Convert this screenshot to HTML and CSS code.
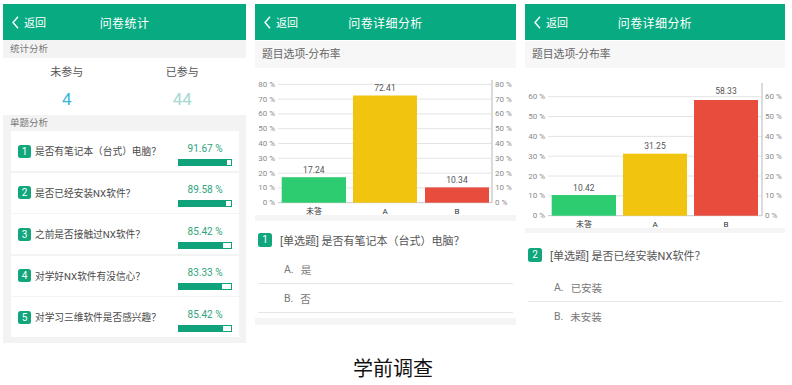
FILE: index.html
```html
<!DOCTYPE html>
<html lang="zh-CN">
<head>
<meta charset="utf-8">
<title>学前调查</title>
<link rel="stylesheet" href="styles.css">
</head>
<body>
<div class="page">
  <div class="row">
    <section class="panel panel-stats">
      <header class="bar">
        <span class="back"><svg class="chev" width="7" height="13" viewBox="0 0 7 13"><path d="M6 0.8 L1 6.5 L6 12.2" fill="none" stroke="#fff" stroke-width="1.4"/></svg>返回</span>
        <span class="title">问卷统计</span>
        <span></span>
      </header>
      <div class="sec">统计分析</div>
      <div class="summary">
        <div class="col"><div class="lbl">未参与</div><div class="num num-a">4</div></div>
        <div class="col"><div class="lbl">已参与</div><div class="num num-b">44</div></div>
      </div>
      <div class="sec sec2">单题分析</div>
      <ul class="qlist">
        <li class="qcard"><span class="badge">1</span><span class="qtext">是否有笔记本（台式）电脑？</span><div class="rate"><span class="pct">91.67 %</span><div class="meter"><div class="fill" style="width:91.67%"></div></div></div></li>
        <li class="qcard"><span class="badge">2</span><span class="qtext">是否已经安装NX软件？</span><div class="rate"><span class="pct">89.58 %</span><div class="meter"><div class="fill" style="width:89.58%"></div></div></div></li>
        <li class="qcard"><span class="badge">3</span><span class="qtext">之前是否接触过NX软件？</span><div class="rate"><span class="pct">85.42 %</span><div class="meter"><div class="fill" style="width:85.42%"></div></div></div></li>
        <li class="qcard"><span class="badge">4</span><span class="qtext">对学好NX软件有没信心？</span><div class="rate"><span class="pct">83.33 %</span><div class="meter"><div class="fill" style="width:83.33%"></div></div></div></li>
        <li class="qcard"><span class="badge">5</span><span class="qtext">对学习三维软件是否感兴趣？</span><div class="rate"><span class="pct">85.42 %</span><div class="meter"><div class="fill" style="width:85.42%"></div></div></div></li>
      </ul>
    </section>

    <section class="panel panel-detail">
      <header class="bar">
        <span class="back"><svg class="chev" width="7" height="13" viewBox="0 0 7 13"><path d="M6 0.8 L1 6.5 L6 12.2" fill="none" stroke="#fff" stroke-width="1.4"/></svg>返回</span>
        <span class="title">问卷详细分析</span>
        <span></span>
      </header>
      <div class="sec-d">题目选项-分布率</div>
      <svg class="chart chart-a" width="261" height="147" viewBox="0 0 261 147">
        <g class="grid">
          <line x1="23" y1="16.3" x2="237" y2="16.3"/>
          <line x1="23" y1="31.1" x2="237" y2="31.1"/>
          <line x1="23" y1="45.9" x2="237" y2="45.9"/>
          <line x1="23" y1="60.7" x2="237" y2="60.7"/>
          <line x1="23" y1="75.5" x2="237" y2="75.5"/>
          <line x1="23" y1="90.3" x2="237" y2="90.3"/>
          <line x1="23" y1="105.1" x2="237" y2="105.1"/>
          <line x1="23" y1="119.9" x2="237" y2="119.9"/>
        </g>
        <line class="base" x1="23" y1="134.7" x2="237" y2="134.7"/>
        <line class="raxis" x1="237" y1="12" x2="237" y2="135"/>
        <g class="ax ax-l">
          <text x="20" y="16.3">80 %</text><text x="20" y="31.1">70 %</text><text x="20" y="45.9">60 %</text><text x="20" y="60.7">50 %</text><text x="20" y="75.5">40 %</text><text x="20" y="90.3">30 %</text><text x="20" y="105.1">20 %</text><text x="20" y="119.9">10 %</text><text x="20" y="134.7">0 %</text>
        </g>
        <g class="ax ax-r">
          <text x="240" y="16.3">80 %</text><text x="240" y="31.1">70 %</text><text x="240" y="45.9">60 %</text><text x="240" y="60.7">50 %</text><text x="240" y="75.5">40 %</text><text x="240" y="90.3">30 %</text><text x="240" y="105.1">20 %</text><text x="240" y="119.9">10 %</text><text x="240" y="134.7">0 %</text>
        </g>
        <rect class="b-g" x="26.7" y="109.2" width="64.3" height="25.5"/>
        <rect class="b-y" x="98" y="27.5" width="64" height="107.2"/>
        <rect class="b-r" x="170" y="119.4" width="64" height="15.3"/>
        <g class="val">
          <text x="58.8" y="104.5">17.24</text>
          <text x="130" y="22.5">72.41</text>
          <text x="202" y="114.5">10.34</text>
        </g>
        <g class="cat">
          <text x="59" y="143">未答</text><text x="130" y="143">A</text><text x="202" y="143">B</text>
        </g>
      </svg>
      <div class="strip strip-a"></div>
      <div class="question"><span class="badge badge-q">1</span><span class="qtitle">[单选题] 是否有笔记本（台式）电脑？</span></div>
      <ul class="options">
        <li class="opt"><span class="key">A.</span>是</li>
        <li class="opt"><span class="key">B.</span>否</li>
      </ul>
      <div class="strip strip-end"></div>
    </section>

    <section class="panel panel-detail panel-r">
      <header class="bar">
        <span class="back"><svg class="chev" width="7" height="13" viewBox="0 0 7 13"><path d="M6 0.8 L1 6.5 L6 12.2" fill="none" stroke="#fff" stroke-width="1.4"/></svg>返回</span>
        <span class="title">问卷详细分析</span>
        <span></span>
      </header>
      <div class="sec-d">题目选项-分布率</div>
      <svg class="chart chart-b" width="260" height="160" viewBox="0 0 260 160">
        <g class="grid">
          <line x1="23" y1="28.7" x2="237" y2="28.7"/>
          <line x1="23" y1="48.5" x2="237" y2="48.5"/>
          <line x1="23" y1="68.4" x2="237" y2="68.4"/>
          <line x1="23" y1="88.2" x2="237" y2="88.2"/>
          <line x1="23" y1="108" x2="237" y2="108"/>
          <line x1="23" y1="127.9" x2="237" y2="127.9"/>
        </g>
        <line class="base" x1="23" y1="147.7" x2="237" y2="147.7"/>
        <line class="raxis" x1="237" y1="15" x2="237" y2="148"/>
        <g class="ax ax-l">
          <text x="20" y="28.7">60 %</text><text x="20" y="48.5">50 %</text><text x="20" y="68.4">40 %</text><text x="20" y="88.2">30 %</text><text x="20" y="108">20 %</text><text x="20" y="127.9">10 %</text><text x="20" y="147.7">0 %</text>
        </g>
        <g class="ax ax-r">
          <text x="240" y="28.7">60 %</text><text x="240" y="48.5">50 %</text><text x="240" y="68.4">40 %</text><text x="240" y="88.2">30 %</text><text x="240" y="108">20 %</text><text x="240" y="127.9">10 %</text><text x="240" y="147.7">0 %</text>
        </g>
        <rect class="b-g" x="26.7" y="127" width="64.3" height="20.7"/>
        <rect class="b-y" x="98" y="85.7" width="64" height="62"/>
        <rect class="b-r" x="169" y="32" width="64" height="115.7"/>
        <g class="val">
          <text x="58.8" y="122.5">10.42</text>
          <text x="130" y="81">31.25</text>
          <text x="201" y="25.5">58.33</text>
        </g>
        <g class="cat">
          <text x="59" y="156">未答</text><text x="130" y="156">A</text><text x="201" y="156">B</text>
        </g>
      </svg>
      <div class="strip strip-b"></div>
      <div class="question question-b"><span class="badge badge-q">2</span><span class="qtitle">[单选题] 是否已经安装NX软件？</span></div>
      <ul class="options">
        <li class="opt"><span class="key">A.</span>已安装</li>
        <li class="opt opt-last"><span class="key">B.</span>未安装</li>
      </ul>
    </section>
  </div>
  <p class="caption">学前调查</p>
</div>
</body>
</html>
```

FILE: styles.css
```css
* { box-sizing: border-box; margin: 0; padding: 0; }

body {
  width: 792px;
  height: 385px;
  overflow: hidden;
  background: #fff;
  font-family: Roboto, "Noto Sans CJK SC", sans-serif;
  color: #444;
  text-spacing-trim: space-all;
}

.page { padding-top: 4px; }

.row {
  display: flex;
  align-items: flex-start;
  gap: 9px;
  padding-left: 3px;
  height: 339px;
}

.panel { display: flex; flex-direction: column; }
.panel-stats { width: 243px; height: 339px; background: #f3f3f3; }
.panel-detail { width: 261px; background: #fff; }
.panel-r { width: 260px; }

/* header bar */
.bar {
  height: 36px;
  background: #08ab81;
  color: #fff;
  display: grid;
  grid-template-columns: 1fr auto 1fr;
  align-items: center;
}
.back {
  display: flex;
  align-items: center;
  gap: 5px;
  padding-left: 9px;
  font-size: 11px;
}
.chev { display: block; }
.title { font-size: 12px; letter-spacing: 0.4px; }

/* left panel */
.sec {
  height: 18px;
  line-height: 18px;
  padding-left: 7px;
  font-size: 9.5px;
  color: #777;
}
.sec2 { height: 16px; line-height: 16px; }

.summary {
  height: 57px;
  background: #fff;
  display: grid;
  grid-template-columns: 1fr 1fr;
  padding: 0 6px;
  text-align: center;
}
.lbl {
  margin-top: 8px;
  font-size: 11px;
  line-height: 14px;
  color: #555;
}
.num {
  margin-top: 9px;
  font-size: 17px;
  line-height: 20px;
}
.num-a { color: #3bb6da; }
.num-b { color: #a6d9d2; }

.qlist {
  list-style: none;
  display: flex;
  flex-direction: column;
  gap: 1.5px;
  padding: 0 7px 0 8px;
}
.qcard {
  height: 40px;
  background: #fff;
  display: flex;
  align-items: center;
  padding: 0 7px;
}
.badge {
  width: 13px;
  height: 13px;
  border-radius: 2.5px;
  background: #12a67d;
  color: #fff;
  font-size: 10px;
  line-height: 13px;
  text-align: center;
  flex: none;
}
.qtext {
  flex: 1;
  margin-left: 4px;
  font-size: 9.7px;
  color: #4a4a4a;
  white-space: nowrap;
}
.rate {
  width: 54px;
  flex: none;
  display: flex;
  flex-direction: column;
  align-items: center;
  margin-top: 6px;
}
.pct {
  font-size: 10px;
  line-height: 12px;
  color: #2ea47c;
}
.meter {
  margin-top: 4px;
  width: 54px;
  height: 7px;
  border: 1px solid #10a37b;
  background: #fff;
}
.fill { height: 100%; background: #10a37b; }

/* detail panels */
.sec-d {
  margin-top: 1px;
  height: 27px;
  line-height: 27px;
  padding-left: 7px;
  background: #f7f7f7;
  font-size: 10.8px;
  color: #666;
}
.chart { display: block; }
.grid line { stroke: #e4e4e4; stroke-width: 1; }
.base { stroke: #c8c8c8; stroke-width: 1; }
.raxis { stroke: #cfcfcf; stroke-width: 1.5; }
.ax text {
  font-size: 8px;
  fill: #8a8a8a;
  dominant-baseline: central;
  font-family: Roboto, sans-serif;
}
.ax-l text { text-anchor: end; }
.ax-r text { text-anchor: start; }
.b-g { fill: #2ecc71; }
.b-y { fill: #f1c40f; }
.b-r { fill: #e74c3c; }
.val text {
  font-size: 8.5px;
  fill: #555;
  text-anchor: middle;
  font-family: Roboto, sans-serif;
}
.cat text {
  font-size: 8px;
  fill: #333;
  text-anchor: middle;
  dominant-baseline: central;
  font-family: Roboto, "Noto Sans CJK SC", sans-serif;
}

.strip { background: #f5f5f5; }
.strip-a { height: 6px; }
.strip-b { height: 5px; }
.strip-end { height: 7px; margin-top: 5px; }

.question {
  height: 34px;
  padding: 4px 0 0 3px;
  display: flex;
  align-items: center;
}
.question-b { height: 40px; }
.badge-q {
  width: 14px;
  height: 14px;
  line-height: 14px;
  font-size: 10px;
}
.qtitle {
  margin-left: 8px;
  font-size: 11px;
  color: #555;
  white-space: nowrap;
}

.options { list-style: none; margin: 0 3px; }
.opt {
  height: 29px;
  display: flex;
  align-items: center;
  padding-left: 26px;
  font-size: 10.5px;
  color: #777;
  border-bottom: 1px solid #e6e6e6;
}
.opt-last { border-bottom: none; }
.key { margin-right: 7px; }

.caption {
  margin-top: 14px;
  text-align: center;
  font-size: 20px;
  line-height: 24px;
  color: #111;
  padding-right: 6px;
}
```
